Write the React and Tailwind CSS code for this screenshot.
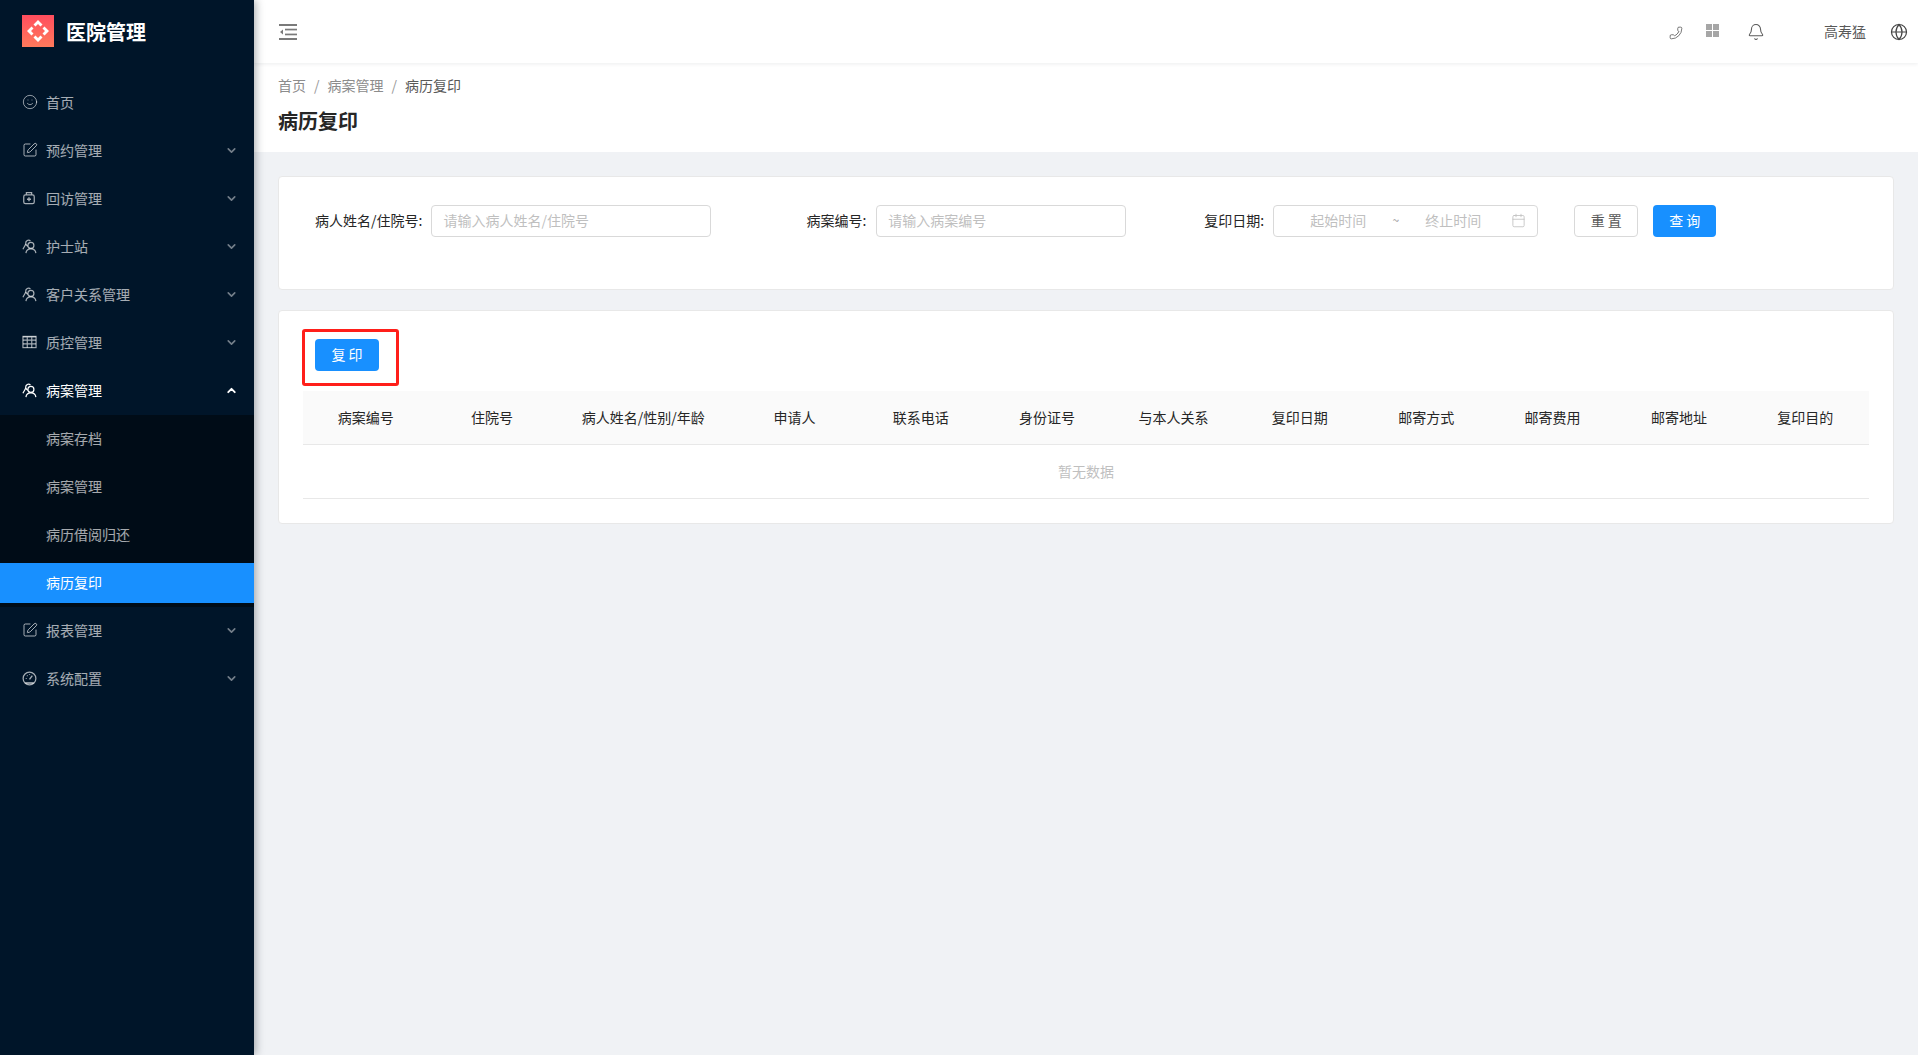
import { Smile, SquarePen, ChevronDown, ChevronUp, Phone, Bell, Globe, Calendar } from "lucide-react";

const MedBox = (props) => (
  <svg viewBox="0 0 16 16" fill="none" stroke="currentColor" strokeWidth="1.4" {...props}>
    <path d="M5 4V1.800h6V4" />
    <rect x="2" y="4.500" width="12" height="10" rx="2" />
    <path d="M8 7.200v4.600M5.700 9.500h4.600" strokeWidth="1.600" />
  </svg>
);

const Nurse = (props) => (
  <svg viewBox="0 0 16 16" fill="none" stroke="currentColor" strokeWidth="1.300" {...props}>
    <circle cx="9.500" cy="6.800" r="3.200" />
    <path d="M4.200 15c.3-2.900 2.200-4.400 5.300-4.400s5 1.500 5.300 4.400" />
    <path d="M9 2.300C8.200 1.300 6.700 1 5.500 1.700 4 2.500 3.800 4 4 5.400 3.400 7 2.200 8.500 1 11" />
    <path d="M4 5.400c.6 1 1.300 1.800 2.400 2.300" />
  </svg>
);

const GridIcon = (props) => (
  <svg viewBox="0 0 16 14" fill="none" stroke="currentColor" strokeWidth="1.200" {...props}>
    <rect x="1" y="1" width="14" height="12" />
    <path d="M1 1.500h14M1 5h14M1 9h14M5.600 1v12M10.400 1v12" />
  </svg>
);

const Dial = (props) => (
  <svg viewBox="0 0 16 16" fill="none" stroke="currentColor" strokeWidth="1.300" {...props}>
    <circle cx="8" cy="8" r="6.800" />
    <path d="M3.500 12.800h9" strokeWidth="1.800" />
    <path d="M8 9l3-4" strokeWidth="1.500" />
    <path d="M4 8h1M5.300 4.800l.6.600M8 3.500v.8" />
  </svg>
);

const menus = [
  { name: "首页", icon: <Smile size={16} strokeWidth={1.300} /> },
  { name: "预约管理", icon: <SquarePen size={16} strokeWidth={1.500} />, arrow: true },
  { name: "回访管理", icon: <MedBox className="w-[14px] h-[14px]" />, arrow: true },
  { name: "护士站", icon: <Nurse className="w-[15px] h-[15px]" />, arrow: true },
  { name: "客户关系管理", icon: <Nurse className="w-[15px] h-[15px]" />, arrow: true },
  { name: "质控管理", icon: <GridIcon className="w-[15px] h-[14px]" />, arrow: true },
];

const subMenus = ["病案存档", "病案管理", "病历借阅归还"];
const columns = ["病案编号", "住院号", "病人姓名/性别/年龄", "申请人", "联系电话", "身份证号", "与本人关系", "复印日期", "邮寄方式", "邮寄费用", "邮寄地址", "复印目的"];

const MenuItem = ({ name, icon, arrow }) => (
  <div className="h-10 mb-2 pb-[2px] pl-[22px] pr-[16px] flex items-center text-sm text-white/65">
    <span className="w-[24px] flex items-center">{icon}</span>
    <span className="flex-1">{name}</span>
    {arrow && <ChevronDown size={13} strokeWidth={3} className="text-white/45" />}
  </div>
);

const Sidebar = () => (
  <aside className="w-[254px] shrink-0 bg-[#001529] shadow-[2px_0_8px_rgba(29,35,41,0.35)] z-10">
    <div className="h-[62px] pl-[22px] flex items-center">
      <svg viewBox="0 0 32 32" className="w-8 h-8">
        <defs>
          <linearGradient id="logo" x1="0" y1="0" x2="0" y2="1">
            <stop offset="0" stopColor="#ff4d5e" />
            <stop offset="1" stopColor="#ff7a5c" />
          </linearGradient>
        </defs>
        <rect width="32" height="32" fill="url(#logo)" />
        <path d="M16 5l4.500 4.500-2 2L16 9l-2.500 2.500-2-2z" fill="#fff" />
        <path d="M16 27l4.500-4.500-2-2L16 23l-2.500-2.500-2 2z" fill="#fff" />
        <path d="M5 16l4.500-4.500 2 2L9 16l2.500 2.500-2 2z" fill="#fff" />
        <path d="M27 16l-4.500-4.500-2 2L23 16l-2.500 2.500 2 2z" fill="#fff" />
      </svg>
      <span className="ml-[12px] pt-px text-xl font-semibold text-white">医院管理</span>
    </div>
    <nav className="mt-[21px]">
      {menus.map((m) => (
        <MenuItem key={m.name} {...m} />
      ))}
      <div className="h-10 mb-1 pb-[2px] pl-[22px] pr-[16px] flex items-center text-sm text-white">
        <span className="w-[24px] flex items-center"><Nurse className="w-[15px] h-[15px]" /></span>
        <span className="flex-1">病案管理</span>
        <ChevronUp size={13} strokeWidth={3.500} />
      </div>
      <div className="bg-[#000c17] py-1 mb-1">
        {subMenus.map((s) => (
          <div key={s} className="h-10 mb-2 pb-[2px] pl-[46px] flex items-center text-sm text-white/65">{s}</div>
        ))}
        <div className="h-10 pb-[2px] pl-[46px] flex items-center text-sm text-white bg-[#1890ff]">病历复印</div>
      </div>
      <MenuItem name="报表管理" icon={<SquarePen size={16} strokeWidth={1.500} />} arrow />
      <MenuItem name="系统配置" icon={<Dial className="w-[15px] h-[15px]" />} arrow />
    </nav>
  </aside>
);

const Header = () => (
  <header className="h-[63px] bg-white shadow-[0_1px_4px_rgba(0,21,41,0.08)] flex items-center justify-between z-[1] relative">
    <svg viewBox="0 0 18 16" className="ml-[25px] w-[18px] h-4 text-[#7a7a7a]" fill="currentColor">
      <rect width="18" height="2" />
      <rect x="6" y="4.700" width="12" height="1.700" />
      <rect x="6" y="9.600" width="12" height="1.700" />
      <rect y="14" width="18" height="2" />
      <path d="M1 8l3-2.500v5z" />
    </svg>
    <div className="flex items-center text-[#595959]">
      <Phone size={14} strokeWidth={1.400} className="-rotate-90 mt-[2px]" />
      <div className="ml-[23px] mb-[2px] grid grid-cols-2 gap-[1px] w-[13px] h-[13px]">
        <span className="bg-[#a6a6a6]" /><span className="bg-[#a6a6a6]" /><span className="bg-[#a6a6a6]" /><span className="bg-[#a6a6a6]" />
      </div>
      <Bell size={18} strokeWidth={1.400} className="ml-[28px]" />
      <span className="ml-[59px] pb-[2px] text-sm">高寿猛</span>
      <Globe size={18} strokeWidth={1.600} className="ml-[24px] mr-[10px] text-[#444]" />
    </div>
  </header>
);

const Field = ({ label, placeholder, className, labelClass }) => (
  <>
    <label className={`pb-[2px] text-sm text-[#262626] whitespace-nowrap ${labelClass}`}>{label}:</label>
    <input
      placeholder={placeholder}
      className={`h-8 px-[11px] pb-[2px] text-sm border border-[#d9d9d9] rounded bg-white placeholder:text-[#bfbfbf] ${className}`}
    />
  </>
);

const SearchCard = () => (
  <section className="h-[114px] bg-white border border-[#e8e8e8] rounded-sm pl-[36px] pt-[28px] flex items-start">
    <div className="flex items-center">
      <Field label="病人姓名/住院号" placeholder="请输入病人姓名/住院号" labelClass="mr-[9px]" className="w-[280px]" />
      <Field label="病案编号" placeholder="请输入病案编号" labelClass="ml-[95px] mr-[10px]" className="w-[250px]" />
      <label className="ml-[78px] mr-[9px] pb-[2px] text-sm text-[#262626] whitespace-nowrap">复印日期:</label>
      <div className="w-[265px] h-8 pb-[2px] border border-[#d9d9d9] rounded flex items-center pl-[36px] text-sm text-[#bfbfbf]">
        <span>起始时间</span>
        <span className="w-[59px] text-center text-[#999] text-xs">~</span>
        <span>终止时间</span>
        <Calendar size={15} strokeWidth={1.300} className="ml-[30px]" />
      </div>
      <button className="ml-[36px] w-[64px] h-8 pb-[2px] border border-[#d9d9d9] rounded text-sm text-[#595959] bg-white">重 置</button>
      <button className="ml-[15px] w-[63px] h-8 pb-[2px] rounded text-sm text-white bg-[#1890ff]">查 询</button>
    </div>
  </section>
);

const TableCard = () => (
  <section className="mt-[20px] bg-white border border-[#e8e8e8] rounded-sm px-[24px] pt-[28px] pb-[24px] relative">
    <button className="ml-[12px] w-[64px] h-8 pb-[2px] rounded text-sm text-white bg-[#1890ff]">复 印</button>
    <div className="absolute left-[23px] top-[18px] w-[97px] h-[57px] border-[3px] border-[#ff1f1a] rounded-[3px]" />
    <table className="mt-[20px] w-full table-fixed text-sm border-collapse">
      <thead>
        <tr className="h-[53px] bg-[#fafafa] border-b border-[#e8e8e8]">
          {columns.map((c, i) => (
            <th key={c} className={`pr-px font-normal text-[#262626] text-center whitespace-nowrap ${i === 2 ? "w-[176px]" : ""}`}>{c}</th>
          ))}
        </tr>
      </thead>
      <tbody>
        <tr className="h-[54px] border-b border-[#e8e8e8]">
          <td colSpan={12} className="text-center text-[#bfbfbf]">暂无数据</td>
        </tr>
      </tbody>
    </table>
  </section>
);

const App = () => (
  <div className="flex h-screen overflow-hidden bg-[#f0f2f5] font-['Noto_Sans_CJK_SC','Liberation_Sans',sans-serif]">
    <Sidebar />
    <main className="flex-1 min-w-0">
      <Header />
      <div className="h-[89px] bg-white pl-[24px] pt-[12px]">
        <div className="flex text-sm text-[#8c8c8c]">
          <span>首页</span>
          <span className="mx-2 text-[#999]">/</span>
          <span>病案管理</span>
          <span className="mx-2 text-[#999]">/</span>
          <span className="text-[#595959]">病历复印</span>
        </div>
        <h1 className="mt-[12px] text-xl font-semibold text-[#262626]">病历复印</h1>
      </div>
      <div className="px-[24px] pt-[24px]">
        <SearchCard />
        <TableCard />
      </div>
    </main>
  </div>
);

export default App;
